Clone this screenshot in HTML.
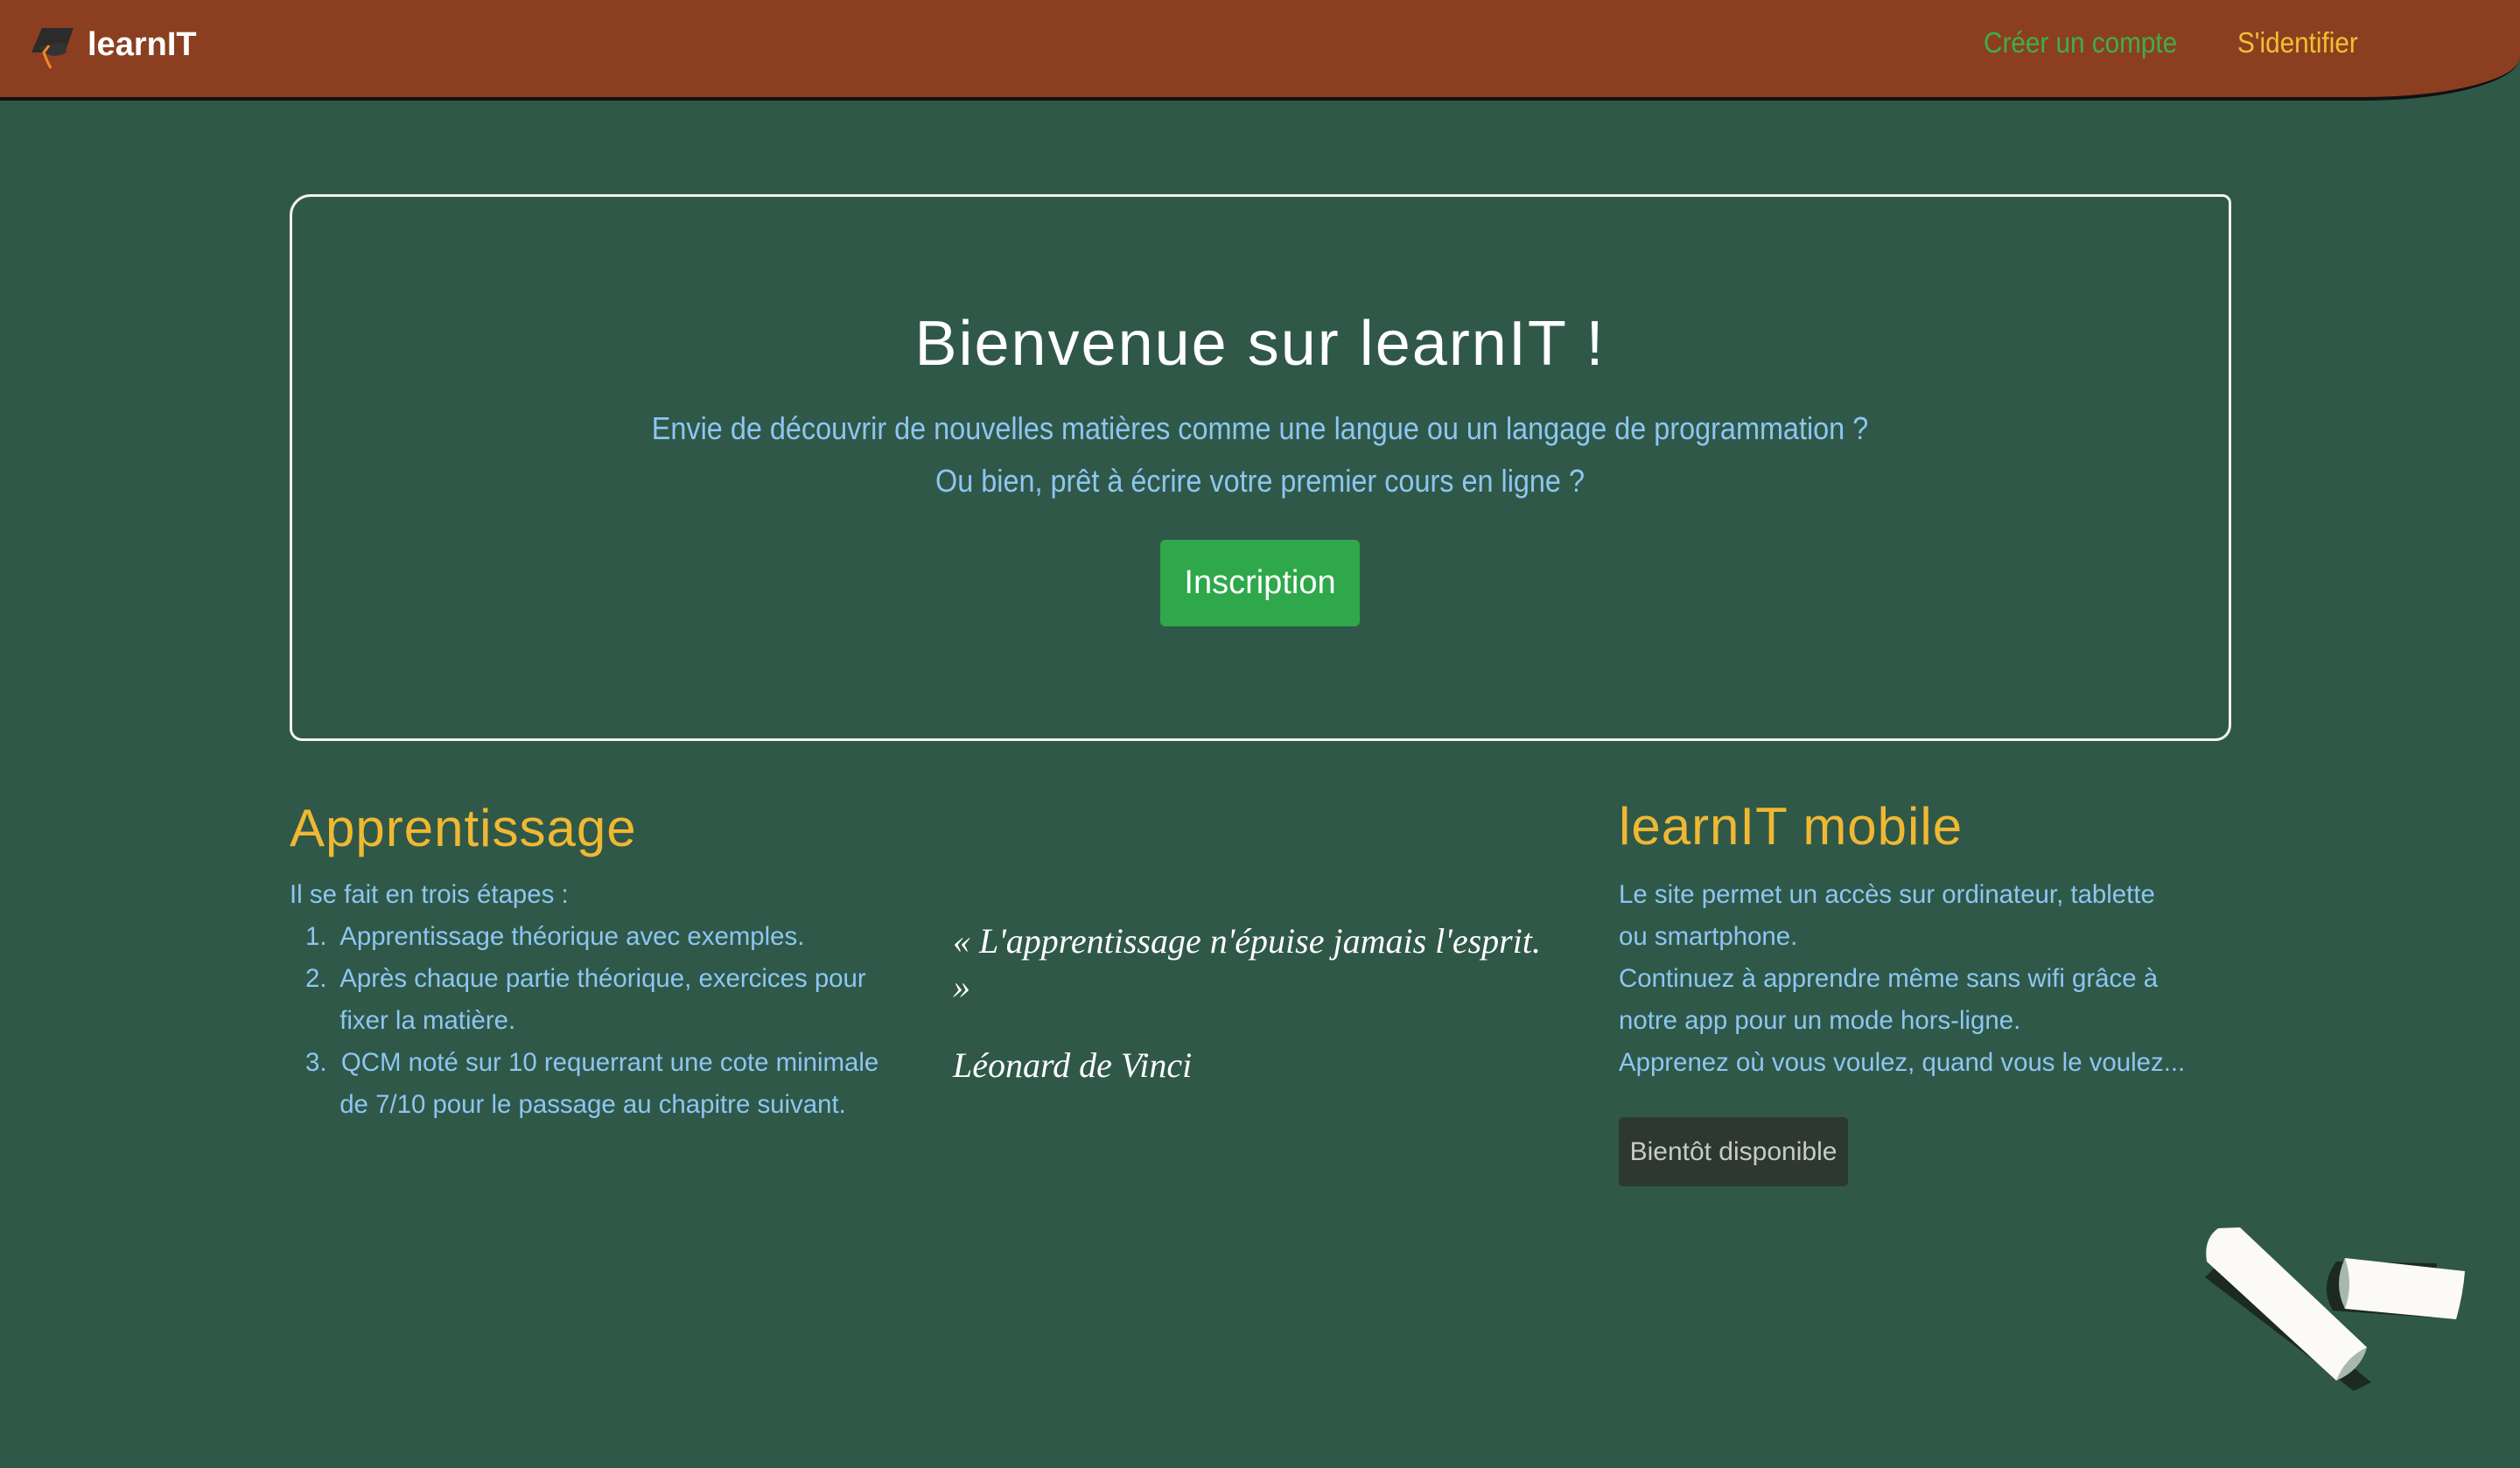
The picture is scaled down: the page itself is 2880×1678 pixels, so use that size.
<!DOCTYPE html>
<html><head><meta charset="utf-8"><style>
*{margin:0;padding:0;box-sizing:border-box}
body{width:2880px;height:1678px;background:#2f5848;overflow:hidden;position:relative;font-family:"Liberation Sans",sans-serif}
.hdr{position:absolute;left:0;top:0;width:2880px;height:115px;background:#8b3f20;border-bottom:4px solid #111;border-bottom-right-radius:180px 50px}
.abs{position:absolute;white-space:nowrap}
.logo{left:100px;top:30px;font-size:38px;color:#fff;font-weight:bold;letter-spacing:0px}
.nav{top:30px;font-size:33px;transform-origin:left;transform:scaleX(0.9)}
.box{position:absolute;left:331px;top:222px;width:2219px;height:625px;border:3px solid #f4f4f0;border-radius:24px 10px 18px 14px}
.blue{color:#8ec6f2}
.h2{color:#f0b832;font-size:60px;letter-spacing:1px}
.txt{font-size:30px;line-height:48px;color:#8ec6f2;transform-origin:left top;transform:scaleX(0.98)}
.script{font-family:"Liberation Serif",serif;font-style:italic;color:#fff}
</style></head><body>
<div class="hdr"></div>
<svg class="abs" style="left:34px;top:30px" width="56" height="50" viewBox="0 0 56 50">
<path d="M14 2 L50 2 L40 30 L2 30 Z" fill="#2b2b2b"/>
<path d="M10 24 Q24 40 42 30 L40 18 Z" fill="#333"/>
<path d="M22 22 L16 30 L20 40 L24 48" stroke="#f08a20" stroke-width="3" fill="none"/>
</svg>
<div class="abs logo">learnIT</div>
<div class="abs nav" style="left:2267px;color:#3fae4a">Créer un compte</div>
<div class="abs nav" style="left:2557px;color:#f0c030">S'identifier</div>

<div class="box"></div>
<div class="abs" style="left:0;width:2880px;text-align:center;top:352px;font-size:72px;color:#fff;letter-spacing:2px">Bienvenue sur learnIT !</div>
<div class="abs blue" style="left:0;width:2880px;text-align:center;top:460px;font-size:36px;line-height:60px;transform:scaleX(0.9)">Envie de découvrir de nouvelles matières comme une langue ou un langage de programmation ?<br>Ou bien, prêt à écrire votre premier cours en ligne ?</div>
<div class="abs" style="left:1326px;top:617px;width:228px;height:99px;background:#2ea84a;border-radius:6px;color:#fff;font-size:38px;line-height:99px;text-align:center">Inscription</div>

<div class="abs h2" style="left:331px;top:912px">Apprentissage</div>
<div class="abs txt" style="left:331px;top:999px">Il se fait en trois étapes :</div>
<div class="abs txt" style="left:349px;top:1047px">1.&nbsp; Apprentissage théorique avec exemples.<br>2.&nbsp; Après chaque partie théorique, exercices pour<br><span style="padding-left:40px">fixer la matière.</span><br>3.&nbsp; QCM noté sur 10 requerrant une cote minimale<br><span style="padding-left:40px">de 7/10 pour le passage au chapitre suivant.</span></div>

<div class="abs script" style="left:1089px;top:1050px;font-size:40px;line-height:52px">« L'apprentissage n'épuise jamais l'esprit.<br>»</div>
<div class="abs script" style="left:1089px;top:1194px;font-size:40px">Léonard de Vinci</div>

<div class="abs h2" style="left:1850px;top:910px">learnIT mobile</div>
<div class="abs txt" style="left:1850px;top:999px">Le site permet un accès sur ordinateur, tablette<br>ou smartphone.<br>Continuez à apprendre même sans wifi grâce à<br>notre app pour un mode hors-ligne.<br>Apprenez où vous voulez, quand vous le voulez...</div>
<div class="abs" style="left:1850px;top:1277px;width:262px;height:79px;background:#2d3833;border-radius:5px;color:#c8ccc8;font-size:30px;line-height:79px;text-align:center">Bientôt disponible</div>

<svg class="abs" style="left:2480px;top:1380px" width="400" height="230" viewBox="0 0 400 230">
<path d="M190 62 Q170 90 186 118 L300 126 L305 64 Z" fill="#1c2a20"/>
<path d="M60 60 L230 200 L210 210 L40 80 Z" fill="#1c2a20"/>
<path d="M200 58 L337 73 Q335 100 327 128 L200 116 Q188 88 200 58 Z" fill="#fbfaf6"/>
<path d="M200 58 Q186 88 200 116 Q210 88 200 58 Z" fill="#a8b8b0"/>
<path d="M55 24 L80 23 L225 160 Q218 186 190 198 L42 62 Q38 36 55 24 Z" fill="#fbfaf6"/>
<path d="M225 160 Q218 186 190 198 Q200 172 225 160 Z" fill="#a8b8b0"/>
</svg>
</body></html>
